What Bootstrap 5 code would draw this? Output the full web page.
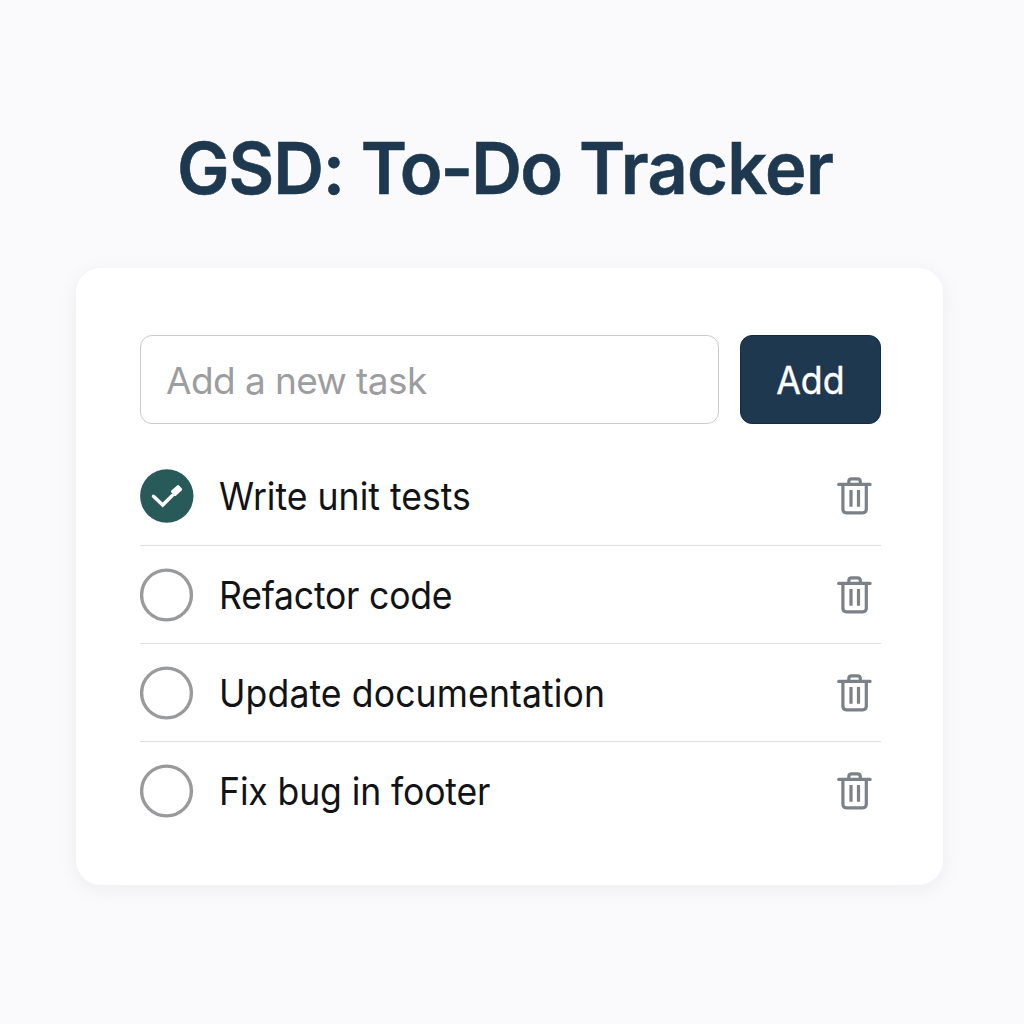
<!DOCTYPE html>
<html lang="en">
<head>
<meta charset="utf-8">
<meta name="viewport" content="width=device-width, initial-scale=1">
<title>GSD: To-Do Tracker</title>
<link href="https://cdn.jsdelivr.net/npm/bootstrap@5.3.0/dist/css/bootstrap.min.css" rel="stylesheet">
<style>
body{font-family:Inter,"Liberation Sans",sans-serif;background:#fafafc;color:#121317;height:1024px;overflow:hidden}
.page{width:867px;margin-left:76px;padding-top:124px}
.title{font-size:72px;line-height:88px;font-weight:600;color:#1d384f;letter-spacing:-1.1px;margin:0 0 56px 101px;white-space:nowrap;transform:scaleX(.976);transform-origin:left;-webkit-text-stroke:.6px #1d384f}
.title-mid{letter-spacing:-2px;margin-right:1.5px}
.title-end{letter-spacing:-.7px}
.panel{height:617px;border:0;border-radius:25px;padding:67px 62px 0 64px;box-shadow:0 4px 20px rgba(30,40,60,.06)}
.task-input{height:89px;width:579px;flex:none;border:1.5px solid #c9cacc;border-radius:12px;font-size:37px;letter-spacing:-.58px;padding:1px 25px 0}
.task-input::placeholder{color:#9c9d9f;opacity:1}
.add-btn,.add-btn:hover{width:141px;height:89px;border:1px solid #122c44;border-radius:12px;background:#1e384f;color:#fff;font-size:38px;padding:2px 0 0}
.add-btn span{display:inline-block;transform:scaleX(.94);-webkit-text-stroke:.4px #fff}
.task-list{margin:23.6px 0 0}
.task{height:98.3px;border-bottom:1.5px solid #dedfe1}
.task:last-child{border-color:transparent}
.task-name{font-size:38px;line-height:46px;margin-left:25px;white-space:nowrap;transform:scaleX(.937);transform-origin:left}
.task:nth-child(2) .task-name{letter-spacing:-.25px}
.task:nth-child(3) .task-name{letter-spacing:.1px}
.task:nth-child(4) .task-name{letter-spacing:-.15px}
.status{width:54px;height:54px;flex:none}
.trash{width:50px;height:50px;flex:none;margin-right:1px}
</style>
<script src="https://cdn.jsdelivr.net/npm/bootstrap@5.3.0/dist/js/bootstrap.bundle.min.js"></script>
</head>
<body>
<svg width="0" height="0" class="d-none">
<symbol id="trash" viewBox="0 0 50 50"><g transform="translate(.3 .8)" fill="none" stroke="#7b8188" stroke-width="3.2" stroke-linecap="round" stroke-linejoin="round"><path d="M8.4 12.6H39.8M18.5 12V9.8Q18.5 7 21.5 7H27Q30 7 30 9.8V12M12.6 13V37.5Q12.6 41 16 41H32.4Q36 41 36 37.5V13"/><path stroke-linecap="butt" d="M20.7 18.2V35M28.2 18.2V35"/></g></symbol>
<symbol id="open" viewBox="0 0 54 54"><circle cx="26.5" cy="27" r="24.9" fill="none" stroke="#999a9c" stroke-width="3.4"/></symbol>
<symbol id="done" viewBox="0 0 54 54"><circle cx="26.8" cy="27" r="26.7" fill="#285a59"/><path d="M13.5 27.3 22.7 36 32.3 26.6" fill="none" stroke="#fff" stroke-width="3.5" stroke-linecap="round"/><rect x="31.3" y="18.2" width="10.5" height="6.8" rx="1.4" fill="#fff" transform="rotate(-42 36.5 21.6)"/></symbol>
</svg>
<main class="page">
<h1 class="title">GSD: <span class="title-mid">To-Do</span> <span class="title-end">Tracker</span></h1>
<section class="card panel">
<form class="d-flex justify-content-between"><input class="form-control task-input" placeholder="Add a new task" aria-label="Add a new task"><button type="button" class="btn add-btn"><span>Add</span></button></form>
<ul class="list-unstyled task-list">
<li class="task d-flex align-items-center"><svg class="status"><use href="#done"/></svg><span class="task-name">Write unit tests</span><svg class="trash ms-auto"><use href="#trash"/></svg></li>
<li class="task d-flex align-items-center"><svg class="status"><use href="#open"/></svg><span class="task-name">Refactor code</span><svg class="trash ms-auto"><use href="#trash"/></svg></li>
<li class="task d-flex align-items-center"><svg class="status"><use href="#open"/></svg><span class="task-name">Update documentation</span><svg class="trash ms-auto"><use href="#trash"/></svg></li>
<li class="task d-flex align-items-center"><svg class="status"><use href="#open"/></svg><span class="task-name">Fix bug in footer</span><svg class="trash ms-auto"><use href="#trash"/></svg></li>
</ul>
</section>
</main>
</body>
</html>
